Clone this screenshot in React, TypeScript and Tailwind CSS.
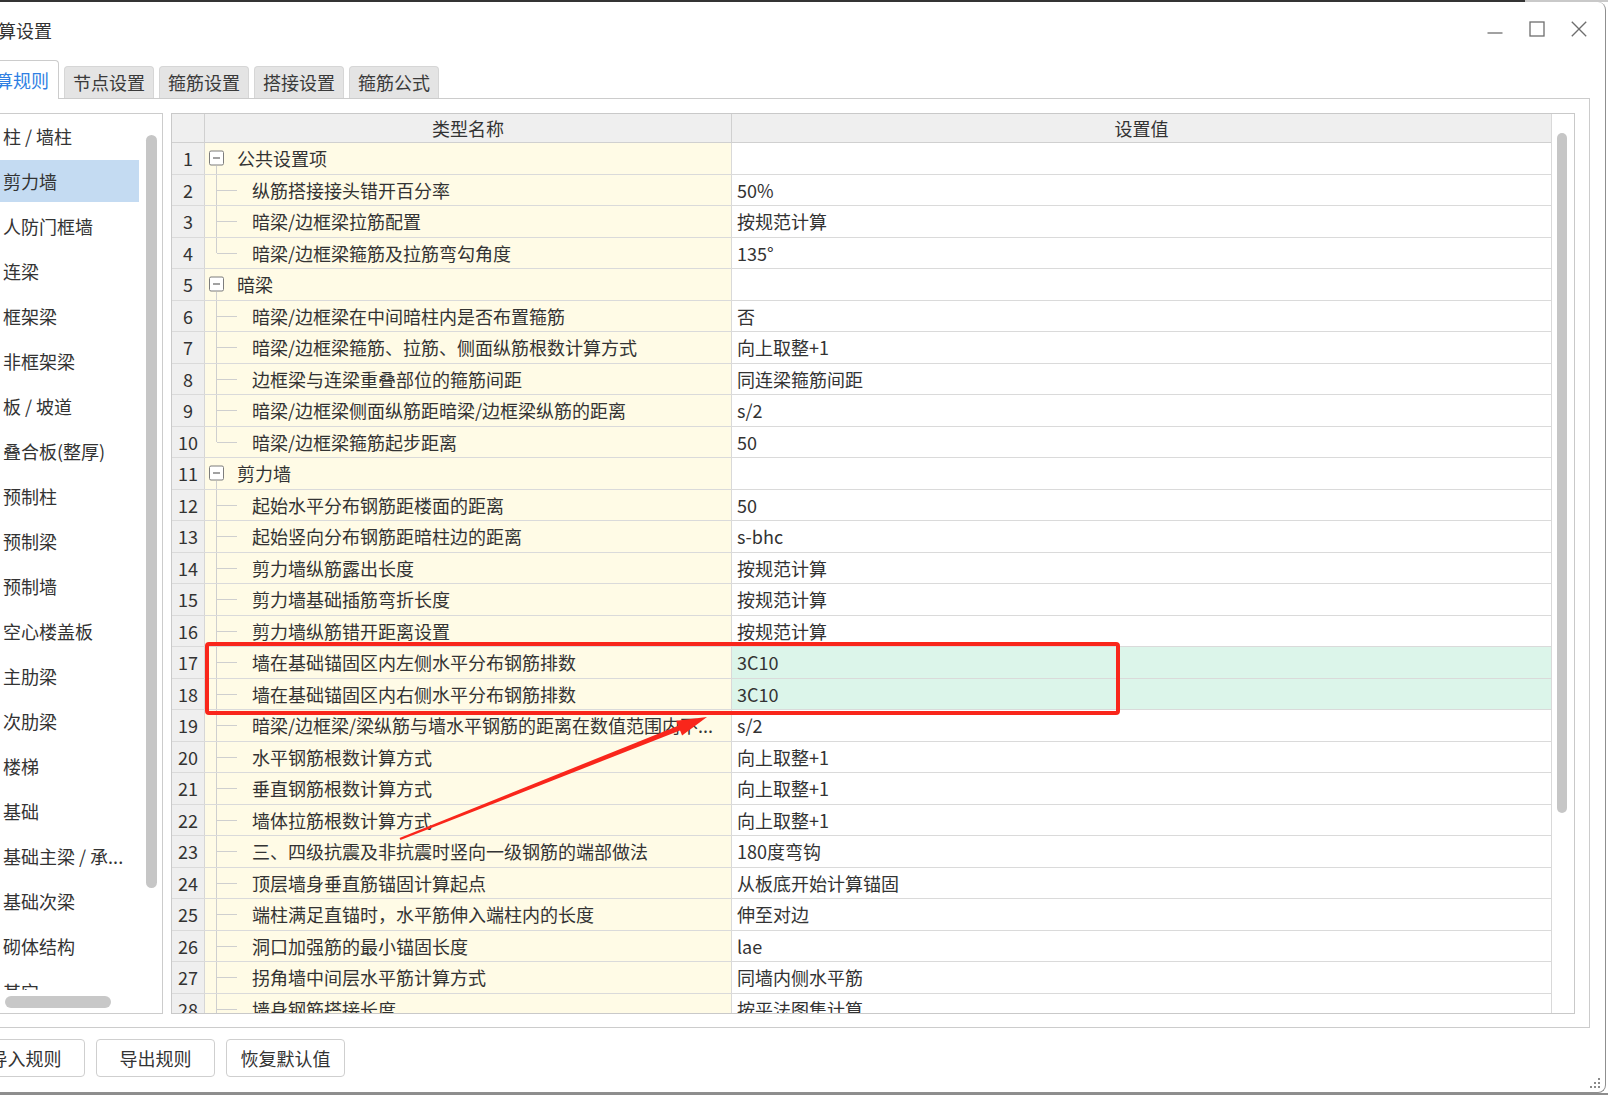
import React from "react";

type Row = { name: string; value: string; group?: boolean; last?: boolean; hl?: boolean };

const rows: Row[] = [
  { name: "公共设置项", value: "", group: true },
  { name: "纵筋搭接接头错开百分率", value: "50%" },
  { name: "暗梁/边框梁拉筋配置", value: "按规范计算" },
  { name: "暗梁/边框梁箍筋及拉筋弯勾角度", value: "135°", last: true },
  { name: "暗梁", value: "", group: true },
  { name: "暗梁/边框梁在中间暗柱内是否布置箍筋", value: "否" },
  { name: "暗梁/边框梁箍筋、拉筋、侧面纵筋根数计算方式", value: "向上取整+1" },
  { name: "边框梁与连梁重叠部位的箍筋间距", value: "同连梁箍筋间距" },
  { name: "暗梁/边框梁侧面纵筋距暗梁/边框梁纵筋的距离", value: "s/2" },
  { name: "暗梁/边框梁箍筋起步距离", value: "50", last: true },
  { name: "剪力墙", value: "", group: true },
  { name: "起始水平分布钢筋距楼面的距离", value: "50" },
  { name: "起始竖向分布钢筋距暗柱边的距离", value: "s-bhc" },
  { name: "剪力墙纵筋露出长度", value: "按规范计算" },
  { name: "剪力墙基础插筋弯折长度", value: "按规范计算" },
  { name: "剪力墙纵筋错开距离设置", value: "按规范计算" },
  { name: "墙在基础锚固区内左侧水平分布钢筋排数", value: "3C10", hl: true },
  { name: "墙在基础锚固区内右侧水平分布钢筋排数", value: "3C10", hl: true },
  { name: "暗梁/边框梁/梁纵筋与墙水平钢筋的距离在数值范围内不...", value: "s/2" },
  { name: "水平钢筋根数计算方式", value: "向上取整+1" },
  { name: "垂直钢筋根数计算方式", value: "向上取整+1" },
  { name: "墙体拉筋根数计算方式", value: "向上取整+1" },
  { name: "三、四级抗震及非抗震时竖向一级钢筋的端部做法", value: "180度弯钩" },
  { name: "顶层墙身垂直筋锚固计算起点", value: "从板底开始计算锚固" },
  { name: "端柱满足直锚时，水平筋伸入端柱内的长度", value: "伸至对边" },
  { name: "洞口加强筋的最小锚固长度", value: "lae" },
  { name: "拐角墙中间层水平筋计算方式", value: "同墙内侧水平筋" },
  { name: "墙身钢筋搭接长度", value: "按平法图集计算" },
];

const leftItems = [
  "柱 / 墙柱",
  "剪力墙",
  "人防门框墙",
  "连梁",
  "框架梁",
  "非框架梁",
  "板 / 坡道",
  "叠合板(整厚)",
  "预制柱",
  "预制梁",
  "预制墙",
  "空心楼盖板",
  "主肋梁",
  "次肋梁",
  "楼梯",
  "基础",
  "基础主梁 / 承...",
  "基础次梁",
  "砌体结构",
  "其它",
];

const tabs = ["节点设置", "箍筋设置", "搭接设置", "箍筋公式"];

function Arrow() {
  const tail = { x: 400, y: 839 };
  const tip = { x: 707, y: 717 };
  const dx = tip.x - tail.x;
  const dy = tip.y - tail.y;
  const len = Math.sqrt(dx * dx + dy * dy);
  const ux = dx / len;
  const uy = dy / len;
  const px = -uy;
  const py = ux;
  const headLen = 30;
  const headHalf = 8;
  const bx = tip.x - ux * headLen;
  const by = tip.y - uy * headLen;
  const sx = tip.x - ux * (headLen - 4);
  const sy = tip.y - uy * (headLen - 4);
  const shaft = [
    [tail.x + px * 1.2, tail.y + py * 1.2],
    [sx + px * 2.6, sy + py * 2.6],
    [sx - px * 2.6, sy - py * 2.6],
    [tail.x - px * 1.2, tail.y - py * 1.2],
  ]
    .map((p) => p.join(","))
    .join(" ");
  const head = [
    [tip.x, tip.y],
    [bx + px * headHalf, by + py * headHalf],
    [bx - px * headHalf, by - py * headHalf],
  ]
    .map((p) => p.join(","))
    .join(" ");
  return (
    <svg
      className="absolute left-0 top-0 pointer-events-none"
      width={1608}
      height={1095}
      viewBox="0 0 1608 1095"
    >
      <polygon points={shaft} fill="#f9261b" />
      <polygon points={head} fill="#f9261b" />
    </svg>
  );
}

function NameCell({ row }: { row: Row }) {
  return (
    <div className="relative w-[527px] h-full shrink-0 border-r border-[#d9d9d9] bg-[#fffbe6] flex items-center overflow-hidden">
      {row.group ? (
        <>
          <div className="absolute left-[4px] top-1/2 -translate-y-1/2 w-[15px] h-[15px] border border-[#7d7d7d] rounded-[2px] bg-white flex items-center justify-center">
            <div className="w-[7px] h-px bg-[#444]" />
          </div>
          <div className="absolute left-[11px] top-[calc(50%+8px)] bottom-0 w-px bg-[#cfcfcf]" />
          <span className="pl-[32px] whitespace-nowrap">{row.name}</span>
        </>
      ) : (
        <>
          <div
            className={
              row.last
                ? "absolute left-[11px] top-0 h-1/2 w-px bg-[#cfcfcf]"
                : "absolute left-[11px] top-0 bottom-0 w-px bg-[#cfcfcf]"
            }
          />
          <div className="absolute left-[12px] top-1/2 w-[20px] h-px bg-[#cfcfcf]" />
          <span className="pl-[47px] whitespace-nowrap">{row.name}</span>
        </>
      )}
    </div>
  );
}

export default function App() {
  return (
    <div
      className="relative w-[1608px] h-[1095px] overflow-hidden bg-white text-[#333333]"
      style={{ fontFamily: '"Noto Sans CJK SC", "Noto Sans", sans-serif' }}
    >
      {/* desktop strip on top */}
      <div className="flex h-[2px]">
        <div className="w-[1525px] bg-[#343434]" />
        <div className="flex-1 bg-[#c9c9c9]" />
      </div>

      {/* window */}
      <div className="absolute left-[-40px] top-[2px] w-[1646px] h-[1091px] bg-white border-r border-b border-[#8f8f8f] rounded-tr-[8px] rounded-br-[8px] flex flex-col">
        {/* title bar */}
        <div className="h-[58px] flex items-center justify-between shrink-0">
          <div className="pl-[20px] text-[18px] leading-none -mt-[2px]">计算设置</div>
          <div className="flex items-center pr-[5px] -mt-[4px]">
            <div className="w-[42px] h-[30px] flex items-center justify-center">
              <svg width="16" height="16" viewBox="0 0 16 16">
                <line x1="0.5" y1="12" x2="15.5" y2="12" stroke="#6e6e6e" strokeWidth="1.3" />
              </svg>
            </div>
            <div className="w-[42px] h-[30px] flex items-center justify-center">
              <svg width="16" height="16" viewBox="0 0 16 16">
                <rect x="1" y="1" width="14" height="14" fill="none" stroke="#6e6e6e" strokeWidth="1.3" />
              </svg>
            </div>
            <div className="w-[42px] h-[30px] flex items-center justify-center">
              <svg width="16" height="16" viewBox="0 0 16 16">
                <line x1="0.8" y1="0.8" x2="15.2" y2="15.2" stroke="#6e6e6e" strokeWidth="1.3" />
                <line x1="15.2" y1="0.8" x2="0.8" y2="15.2" stroke="#6e6e6e" strokeWidth="1.3" />
              </svg>
            </div>
          </div>
        </div>

        {/* tabs */}
        <div className="h-[38px] flex items-end pl-[7px] shrink-0 relative z-10">
          <div className="w-[92px] h-[39px] -mb-px bg-white border border-b-0 border-[#cccccc] rounded-t-[4px] flex items-center justify-center text-[18px] leading-none text-[#2f7fe3]">
            计算规则
          </div>
          {tabs.map((t) => (
            <div
              key={t}
              className="ml-[5px] w-[90px] h-[32px] bg-[#e4e4e4] border border-b-0 border-[#d6d6d6] rounded-t-[4px] flex items-center justify-center text-[18px] leading-none text-[#3a3a3a] pb-[2px]"
            >
              {t}
            </div>
          ))}
        </div>

        {/* pane */}
        <div className="ml-[10px] w-[1620px] h-[930px] shrink-0 border border-[#cccccc] flex items-start pt-[14px] pl-[9px] pr-[14px]">
          {/* left list panel */}
          <div className="relative w-[183px] h-[901px] shrink-0 border border-[#cccccc] bg-white">
            <div className="h-[876px] overflow-hidden pt-[1px] flex flex-col gap-[3px]">
              {leftItems.map((it, i) => (
                <div
                  key={it}
                  className={
                    i === 1
                      ? "w-[158px] h-[42px] shrink-0 flex items-center pl-[22px] text-[18px] leading-none whitespace-nowrap bg-[#c4dbf2]"
                      : "w-[158px] h-[42px] shrink-0 flex items-center pl-[22px] text-[18px] leading-none whitespace-nowrap"
                  }
                >
                  {it}
                </div>
              ))}
            </div>
            <div className="absolute right-[5px] top-[21px] w-[11px] h-[753px] rounded-full bg-[#c6c6c6]" />
            <div className="absolute left-[24px] top-[882px] w-[106px] h-[12px] rounded-full bg-[#c8c8c8]" />
          </div>

          {/* table */}
          <div className="ml-[8px] w-[1404px] h-[901px] shrink-0 border border-[#c9c9c9] flex bg-white">
            <div className="w-[1380px] h-full shrink-0 flex flex-col overflow-hidden border-r border-[#d9d9d9]">
              {/* header */}
              <div className="h-[29px] shrink-0 flex border-b border-[#d0d0d0] bg-[#efefef] text-[18px] leading-none">
                <div className="w-[33px] h-full shrink-0 border-r border-[#d0d0d0]" />
                <div className="w-[527px] h-full shrink-0 border-r border-[#d0d0d0] flex items-center justify-center">
                  类型名称
                </div>
                <div className="flex-1 h-full flex items-center justify-center">设置值</div>
              </div>
              {/* rows */}
              {rows.map((r, i) => (
                <div
                  key={i}
                  className="h-[31.5px] shrink-0 flex border-b border-[#dadada] text-[18px] leading-none"
                >
                  <div className="w-[33px] h-full shrink-0 border-r border-[#d6d6d6] bg-[#efefef] flex items-center justify-center">
                    {i + 1}
                  </div>
                  <NameCell row={r} />
                  <div
                    className={
                      r.hl
                        ? "flex-1 h-full flex items-center pl-[5px] bg-[#dcf5ea] whitespace-nowrap"
                        : "flex-1 h-full flex items-center pl-[5px] bg-white whitespace-nowrap"
                    }
                  >
                    {r.value}
                  </div>
                </div>
              ))}
            </div>
            <div className="relative flex-1 h-full bg-white">
              <div className="absolute left-[5px] top-[19px] w-[10px] h-[680px] rounded-full bg-[#c6c6c6]" />
            </div>
          </div>
        </div>

        {/* buttons */}
        <div className="mt-[11px] h-[38px] flex items-center gap-[11px] pl-[6px] shrink-0">
          {["导入规则", "导出规则", "恢复默认值"].map((b) => (
            <div
              key={b}
              className="w-[119px] h-[38px] border border-[#cfcfcf] rounded-[4px] bg-white flex items-center justify-center text-[18px] leading-none text-[#333]"
            >
              {b}
            </div>
          ))}
        </div>

        {/* resize grip */}
        <svg className="absolute right-[4px] bottom-[3px]" width="12" height="12" viewBox="0 0 12 12">
          <rect x="9" y="1" width="2" height="2" fill="#8a8a8a" />
          <rect x="5" y="5" width="2" height="2" fill="#8a8a8a" />
          <rect x="9" y="5" width="2" height="2" fill="#8a8a8a" />
          <rect x="1" y="9" width="2" height="2" fill="#8a8a8a" />
          <rect x="5" y="9" width="2" height="2" fill="#8a8a8a" />
          <rect x="9" y="9" width="2" height="2" fill="#8a8a8a" />
        </svg>
      </div>

      {/* bottom desktop strip */}
      <div className="absolute left-0 bottom-0 w-[1608px] h-[2px] bg-[#8d8d8d]" />

      {/* red annotation box */}
      <div className="absolute left-[205px] top-[642px] w-[915px] h-[73px] border-[4px] border-[#f9261b] rounded-[4px] pointer-events-none" />
      <Arrow />
    </div>
  );
}
